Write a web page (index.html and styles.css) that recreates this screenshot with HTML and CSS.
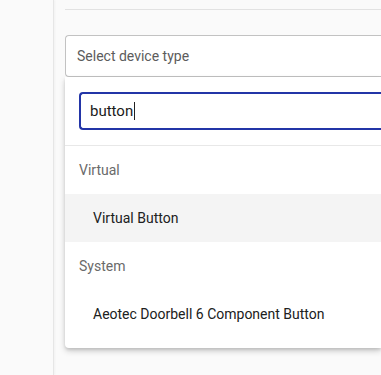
FILE: index.html
```html
<!DOCTYPE html>
<html lang="en">
<head>
  <meta charset="UTF-8" />
  <title>Select device type</title>
  <link rel="stylesheet" href="styles.css">
</head>
<body>
  <div class="page">
    <div class="gutter"></div>
    <div class="main">
      <div class="rule"></div>
      <div class="select">Select device type</div>
      <div class="panel">
        <div class="search-wrap">
          <div class="search">button<span class="caret"></span></div>
        </div>
        <div class="list">
          <div class="group">Virtual</div>
          <div class="item active">Virtual Button</div>
          <div class="group">System</div>
          <div class="item">Aeotec Doorbell 6 Component Button</div>
        </div>
      </div>
    </div>
  </div>
</body>
</html>
```

FILE: styles.css
```css
* { box-sizing: border-box; margin: 0; padding: 0; }
html, body {
  height: 100%;
  background: #fafafa;
  font-family: Roboto, "Noto Sans", sans-serif;
  overflow: hidden;
}
.page { display: flex; height: 100%; }
.gutter {
  width: 54px; flex: none;
  border-right: 1px solid #e6e6e6;
  box-shadow: 1px 0 2px rgba(0,0,0,0.04);
}
.main { padding-left: 11px; flex: 1; min-width: 0; }
.rule { height: 10px; border-bottom: 1px solid #e2e2e2; }
.select {
  margin-top: 25px;
  height: 42px;
  border: 1px solid #c2c2c2;
  border-right: none;
  border-radius: 4px 0 0 4px;
  background: #fff;
  display: flex; align-items: center;
  padding-left: 11px;
  font-size: 14px;
  color: #5c5c5c;
}
.panel {
  background: #fff;
  border-radius: 0 0 0 4px;
  box-shadow: 0 3px 6px rgba(0,0,0,0.18), 0 2px 3px rgba(0,0,0,0.1);
  padding-bottom: 10px;
}
.search-wrap { padding: 15px 0 15px 14px; border-bottom: 1px solid #e8e8e8; }
.search {
  height: 38px;
  border: 2px solid #2335a7;
  border-right: none;
  border-radius: 4px 0 0 4px;
  display: flex; align-items: center;
  padding-left: 9px;
  font-size: 15px;
  color: #1b1b1b;
}
.caret { width: 1px; height: 18px; background: #222; margin-left: 1px; }
.group {
  height: 48px;
  display: flex; align-items: center;
  padding-left: 14px;
  font-size: 14px;
  color: #6a6a6a;
}
.item {
  height: 48px;
  display: flex; align-items: center;
  padding-left: 28px;
  font-size: 14px;
  color: #202020;
}
.item.active { background: #f4f4f4; }
```
